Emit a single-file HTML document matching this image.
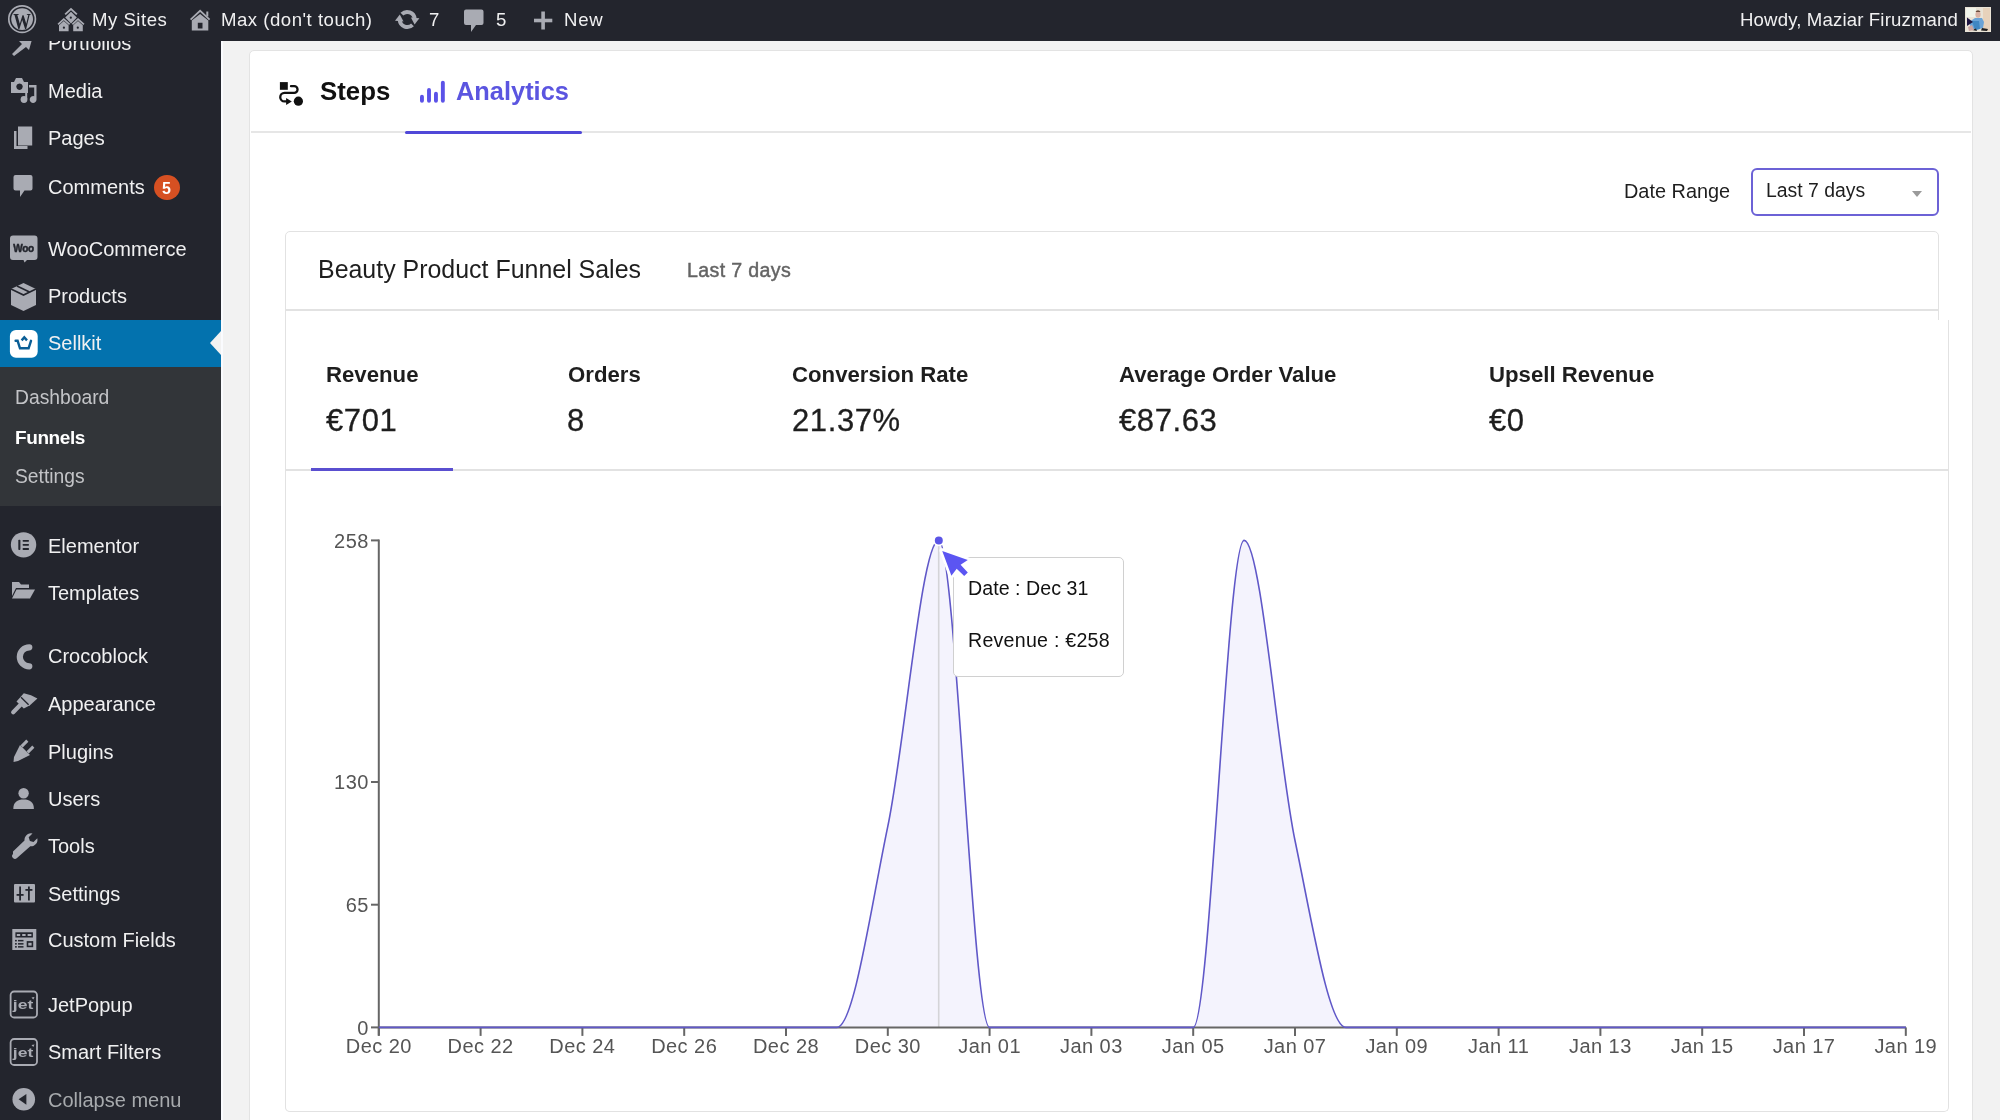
<!DOCTYPE html>
<html><head><meta charset="utf-8">
<style>
*{margin:0;padding:0;box-sizing:border-box}
.a,.t,.sub,svg{will-change:transform}
html,body{width:2000px;height:1120px;overflow:hidden;background:#f2f2f2;font-family:"Liberation Sans",sans-serif;position:relative}
.a{position:absolute;white-space:nowrap;line-height:1}
#bar{position:absolute;left:0;top:0;width:2000px;height:41px;background:#23252d;z-index:5}
#bar .t{position:absolute;color:#f0f0f1;font-size:18.6px;line-height:1;white-space:nowrap}
#side{position:absolute;left:0;top:0;width:221px;height:1120px;background:#23252d}
#side .t{position:absolute;left:48px;color:#f0f0f1;font-size:20px;line-height:1;margin-top:-0.6px;white-space:nowrap}
#side .ic{position:absolute;left:9px}
#side .sub{position:absolute;left:14.5px;color:#c3c4c7;font-size:19.3px;line-height:1;white-space:nowrap}
#panel{position:absolute;left:249px;top:50px;width:1724px;height:1200px;background:#fff;border:1.5px solid #e3e3e3;border-radius:5px}
</style></head>
<body>
<div id="side">
  <div id="sellbg" style="position:absolute;left:0;top:319.6px;width:221px;height:47.8px;background:#0372ae"></div>
  <div style="position:absolute;left:0;top:367px;width:221px;height:139px;background:#323539"></div>
  <div style="position:absolute;left:209.5px;top:330.7px;width:0;height:0;border-top:12.6px solid transparent;border-bottom:12.6px solid transparent;border-right:11.5px solid #f2f2f2"></div>
<svg style="position:absolute;left:0;top:0;z-index:1" width="230" height="1120" viewBox="0 0 230 1120">
 <g fill="#a9abb3">
  <!-- portfolios pin (partially hidden by bar) -->
  <path d="M12,54 L22,44 L19,41 L33,36 L29,50 L26,47 L14,56 Z"/>
  <!-- media: camera -->
  <path d="M11,82 h3 l2,-4 h6 l2,4 h4 v11 h-17 Z M19.5,83.5 a3.2,3.2 0 1,0 0.01,0 Z" fill-rule="evenodd"/>
  <circle cx="19.5" cy="86.5" r="2.6" fill="#23252d"/>
  <!-- media: notes -->
  <path d="M29,85 h7.5 v14.5 a3.4,3.4 0 1,1 -2.3,-3.2 v-8.8 h-5.2 Z"/>
  <circle cx="24" cy="99.5" r="3.4"/>
  <rect x="25.2" y="89" width="2" height="10"/>
  <!-- pages -->
  <path d="M14,131 h2.5 v15 h11 v3 h-13.5 Z"/>
  <rect x="18" y="126.5" width="14.2" height="19"/>
  <!-- comments bubble -->
  <path d="M15.5,175 h15 a2,2 0 0 1 2,2 v11.5 a2,2 0 0 1 -2,2 h-6 l-4.5,6.5 v-6.5 h-4.5 a2,2 0 0 1 -2,-2 v-11.5 a2,2 0 0 1 2,-2 Z"/>
  <!-- woo -->
  <path d="M13,235.5 h21.5 a3,3 0 0 1 3,3 v18.5 a3,3 0 0 1 -3,3 h-7.5 l-2.5,2.5 l-1,-2.5 h-10.5 a3,3 0 0 1 -3,-3 v-18.5 a3,3 0 0 1 3,-3 Z"/>
  <!-- products box -->
  <path d="M23.5,283 L36,289 L36,305 L23.5,311 L11,305 L11,289 Z"/>
  <!-- elementor -->
  <circle cx="23.55" cy="544.85" r="12.7"/>
  <!-- templates folder -->
  <path d="M12,582 h7 l2,2.5 h8 v3.5 h-13 l-4,8 Z"/>
  <path d="M16.5,589.5 h18.5 l-5,9 h-18 Z"/>
  <!-- crocoblock -->
  <path d="M29.3,647.3 A9.5,9.5 0 0 0 29.3,666.3" fill="none" stroke="#a9abb3" stroke-width="6.2" stroke-linecap="round"/>
  <!-- appearance brush -->
  <path d="M16.5,701.5 L23.8,693.2 L31,695.2 L37.4,698.6 L30,705.3 L23.8,708.6 Z"/><line x1="21" y1="697.2" x2="28.6" y2="704.8" stroke="#23252d" stroke-width="1.3"/>
  <line x1="13.2" y1="712.2" x2="20.5" y2="704.8" stroke="#a9abb3" stroke-width="4.2" stroke-linecap="round"/>
  <!-- plugins -->
  <path d="M14,757 L20,745 L30,755 L18,761 L13.5,762 Z"/>
  <rect x="23" y="739.5" width="3" height="8" transform="rotate(45 24.5 743.5)"/>
  <rect x="29" y="745.5" width="3" height="8" transform="rotate(45 30.5 749.5)"/>
  <!-- users -->
  <circle cx="23.6" cy="793.2" r="5.2"/>
  <path d="M13.3,809 c0,-7 4,-9.5 10.3,-9.5 s10.3,2.5 10.3,9.5 Z"/>
  <!-- tools wrench -->
  <path d="M13,851.5 L24.5,840.5 a6.5,6.5 0 0 1 8,-7 l-3.8,3.8 l1.2,3.6 l3.6,1.2 l3.8,-3.8 a6.5,6.5 0 0 1 -7,8 L17,858 a2.8,2.8 0 0 1 -4,-4 Z"/>
  <!-- settings sliders -->
  <rect x="14" y="884" width="21" height="18.5" rx="1"/>
  <!-- custom fields -->
  <rect x="12.3" y="929" width="24" height="21"/>
  <rect x="15.4" y="932.3" width="17.5" height="5.2" fill="#23252d"/>
  <rect x="16.8" y="934" width="3.4" height="2" />
  <rect x="22.2" y="934" width="3.4" height="2" />
  <rect x="27.6" y="934" width="3.8" height="2" />
  <g fill="#23252d"><rect x="18" y="939.9" width="5.5" height="1.5"/><rect x="18" y="943.1" width="5.5" height="1.5"/><rect x="18" y="946.1" width="5.5" height="1.5"/>
  <rect x="15" y="939.9" width="1.8" height="1.5"/><rect x="15" y="943.1" width="1.8" height="1.5"/><rect x="15" y="946.1" width="1.8" height="1.5"/>
  <rect x="26.7" y="941.1" width="6.5" height="6.1"/></g>
  <rect x="28.3" y="942.8" width="3.3" height="2.8"/>
  <!-- collapse -->
  <circle cx="23.75" cy="1099.3" r="11.3"/>
 </g>
 <!-- dark details -->
 <g fill="#23252d">
  <rect x="18.3" y="539.8" width="2.1" height="10.2" rx="0.8"/>
  <rect x="22.6" y="540" width="6.4" height="1.8" rx="0.7"/>
  <rect x="22.6" y="544" width="6.4" height="1.8" rx="0.7"/>
  <rect x="22.6" y="548.1" width="6.4" height="1.8" rx="0.7"/>
  <path d="M18.6,1099.3 L26.4,1093.9 L26.4,1104.7 Z"/>
  <!-- settings slider lines -->
  <rect x="19.2" y="886.5" width="1.8" height="14"/>
  <rect x="16.6" y="894" width="7" height="1.8"/>
  <rect x="28" y="886.5" width="1.8" height="14"/>
  <rect x="25.4" y="889" width="7" height="1.8"/>
  <!-- products box lines -->
  <path d="M11,289 L23.5,295 L36,289" fill="none" stroke="#23252d" stroke-width="1.6"/>
  
  <path d="M17,286 L29.5,292" fill="none" stroke="#23252d" stroke-width="1.6"/>
 </g>
 <!-- woo text -->
 <text x="23.6" y="251.6" text-anchor="middle" font-family="Liberation Sans" font-weight="bold" font-size="10" fill="#23252d" stroke="#23252d" stroke-width="0.5" letter-spacing="-0.3">Woo</text>
 <!-- sellkit -->
 <rect x="9.9" y="329.9" width="27.8" height="27.8" rx="6" fill="#fff"/>
 <path d="M15.6,340.8 H17.6 L20,348.3 H28.6 L31,340.8" fill="none" stroke="#0a5e96" stroke-width="2.4" stroke-linejoin="miter" stroke-linecap="round"/><path d="M21.6,340.4 L24.3,337.4 L27,340.4" fill="none" stroke="#0a5e96" stroke-width="2.4" stroke-linecap="butt"/>
 <!-- jet boxes -->
 <g fill="none" stroke="#a9abb3" stroke-width="1.8">
  <rect x="10.6" y="991.5" width="26.4" height="26" rx="3.5"/>
  <rect x="10.6" y="1039" width="26.4" height="26" rx="3.5"/>
 </g>
 <g fill="#a9abb3" font-family="Liberation Sans" font-weight="bold" font-size="13">
  <text x="12.8" y="1009.4" textLength="20.5" lengthAdjust="spacingAndGlyphs">jet</text>
  <text x="12.8" y="1056.9" textLength="20.5" lengthAdjust="spacingAndGlyphs">jet</text>
  <path d="M31.5,997.5 l3,-0.5 l-1.2,2.6 Z M31.5,1045 l3,-0.5 l-1.2,2.6 Z"/>
 </g>
</svg>

  <div class="t" style="top:34.07px">Portfolios</div>
  <div class="t" style="top:81.57px">Media</div>
  <div class="t" style="top:128.67px">Pages</div>
  <div class="t" style="top:177.37px">Comments</div>
  <div style="position:absolute;left:154.3px;top:175.2px;width:25.5px;height:25px;border-radius:50%;background:#d65022"></div>
  <div class="t" style="left:162.3px;top:181.2px;font-size:16px;font-weight:bold;color:#fff;margin-top:0">5</div>
  <div class="t" style="top:239.57px">WooCommerce</div>
  <div class="t" style="top:287.07px">Products</div>
  <div class="t" style="top:334.07px">Sellkit</div>
  <div class="sub" style="top:388.26px">Dashboard</div>
  <div class="sub" style="top:428.41px;color:#fff;font-weight:bold;font-size:19px;letter-spacing:-0.4px">Funnels</div>
  <div class="sub" style="top:467.16px">Settings</div>
  <div class="t" style="top:536.67px">Elementor</div>
  <div class="t" style="top:583.47px">Templates</div>
  <div class="t" style="top:646.47px">Crocoblock</div>
  <div class="t" style="top:694.47px">Appearance</div>
  <div class="t" style="top:742.37px">Plugins</div>
  <div class="t" style="top:789.27px">Users</div>
  <div class="t" style="top:836.87px">Tools</div>
  <div class="t" style="top:884.17px">Settings</div>
  <div class="t" style="top:931.07px">Custom Fields</div>
  <div class="t" style="top:995.77px">JetPopup</div>
  <div class="t" style="top:1042.67px">Smart Filters</div>
  <div class="t" style="top:1090.67px;color:#a7aaad">Collapse menu</div>
</div>
<div id="bar">
<svg style="position:absolute;left:0;top:0;z-index:6" width="2000" height="41" viewBox="0 0 2000 41">
 <g fill="#a9abb3">
  <!-- WP logo -->
  <circle cx="22.1" cy="19.1" r="13.3" fill="none" stroke="#a9abb3" stroke-width="1.7"/>
  <circle cx="22.1" cy="19.1" r="10.9"/>
  <!-- my sites -->
  <path d="M64.5,13.8 L71,7.8 L77.5,13.8 L76.2,15 L71,10.2 L65.8,15 Z"/>
  <path d="M71,11.8 L76.8,17.6 L71,23.4 L65.2,17.6 Z"/>
  <path d="M57.5,23.8 L63.8,18 L70.2,23.8 L69,25 L63.8,20.3 L58.7,25 Z"/>
  <path d="M59,25.3 L63.8,21 L68.6,25.3 V31.2 H59 Z"/>
  <path d="M71.8,23.8 L78,18 L84.5,23.8 L83.3,25 L78,20.3 L73,25 Z"/>
  <path d="M73.2,25.3 L78,21 L82.8,25.3 V31.2 H73.2 Z"/>
  <!-- home -->
  <path d="M190,19 L200.1,9.6 L210.2,19 L209,20.3 L200.1,12 L191.2,20.3 Z"/>
  <rect x="206.3" y="11.5" width="2" height="5"/>
  <path d="M191.8,20.6 L200.1,13.9 L208.3,20.6 V30.5 H191.8 Z M197.8,22.8 V28.6 H202.5 V22.8 Z" fill-rule="evenodd"/>
  <!-- comments -->
  <path d="M466,9.6 h15.5 a2,2 0 0 1 2,2 v11.5 a2,2 0 0 1 -2,2 h-5.5 l-5,6.8 v-6.8 h-5 a2,2 0 0 1 -2,-2 v-11.5 a2,2 0 0 1 2,-2 Z"/>
  <!-- plus -->
  <rect x="541.3" y="11.5" width="3.6" height="18"/>
  <rect x="534" y="18.7" width="18.3" height="3.6"/>
 </g>
 <!-- updates -->
 <g fill="none" stroke="#a9abb3" stroke-width="4">
  <path d="M401.9,14.2 A7.5,7.5 0 0 1 414.67,18.85"/>
  <path d="M412.5,24.8 A7.5,7.5 0 0 1 399.73,20.15"/>
 </g>
 <g fill="#a9abb3">
  <path d="M419.4,18.3 L410.9,17.6 L414.6,24.6 Z"/>
  <path d="M395,20.7 L403.5,21.4 L399.8,14.4 Z"/>
 </g>
 <!-- wp W -->
 <text x="13.3" y="29" font-family="Liberation Serif" font-weight="bold" font-size="23" fill="#23252d" textLength="17.6" lengthAdjust="spacingAndGlyphs">W</text>
 <!-- dots for my sites -->
 <g fill="#23252d">
  <circle cx="70.8" cy="17.7" r="1.1"/>
  <circle cx="63.9" cy="27.7" r="1.1"/>
  <circle cx="77.8" cy="27.7" r="1.1"/>
 </g>
 <!-- avatar -->
 <g>
  <rect x="1965" y="7" width="26" height="25" fill="#e9e3d6"/>
  <rect x="1966" y="8" width="10" height="9" fill="#f1f4ea"/>
  <rect x="1983" y="8" width="7" height="23" fill="#e7d2bb"/>
  <ellipse cx="1978" cy="14.5" rx="2.6" ry="3.2" fill="#d9b2a4"/>
  <path d="M1975.5,12 a2.6,2.4 0 0 1 5,0 Z" fill="#6a4d3d"/>
  <path d="M1969,22 L1975,18 L1982,18 L1984,22 L1983,28 L1976,30 L1971,28 Z" fill="#6aa3d6"/>
  <path d="M1972,21 L1979,21 L1980,29 L1975,30 Z" fill="#3f86c2"/>
  <path d="M1967,17.5 L1973,22 L1967,26 Z" fill="#1d1540"/>
  <path d="M1972,30 L1976,28.5 L1977,31 Z M1982,28 L1988,29 L1987,31 L1981,30.5 Z" fill="#222"/>
  <path d="M1968,27 L1972,25 L1974,30 L1969,31 Z" fill="#cba5a0"/>
 </g>
</svg>

  <div class="t" style="left:92px;top:11.3px;letter-spacing:0.5px">My Sites</div>
  <div class="t" style="left:221px;top:11.3px;letter-spacing:0.5px">Max (don't touch)</div>
  <div class="t" style="left:428.5px;top:11.3px">7</div>
  <div class="t" style="left:496px;top:11.3px">5</div>
  <div class="t" style="left:563.8px;top:11.3px;letter-spacing:0.7px">New</div>
  <div class="t" style="left:1740px;top:11.3px;letter-spacing:0.15px">Howdy, Maziar Firuzmand</div>
</div>
<div style="position:absolute;left:221px;top:41px;width:1.5px;height:1079px;background:#fafbfe"></div>
<div id="panel"></div>
<div id="main">
<svg style="position:absolute;left:0;top:0" width="600" height="140" viewBox="0 0 600 140">
  <rect x="279.9" y="82.1" width="7.9" height="7.7" fill="#111"/>
  <path d="M291,86.2 H294.2 A3.3,3.3 0 0 1 294.2,92.9 H284.5 A4.25,4.25 0 0 0 284.5,101.4 H288" fill="none" stroke="#111" stroke-width="2.3" stroke-linecap="round"/>
  <path d="M286.1,98.1 L291.8,101.5 L286.1,104.9 Z" fill="#111"/>
  <circle cx="298.4" cy="101.2" r="4.6" fill="#111"/>
  <g stroke="#5b52e8" stroke-width="3.9" stroke-linecap="round">
   <line x1="421.95" y1="96.8" x2="421.95" y2="100.7"/>
   <line x1="429" y1="89.9" x2="429" y2="100.7"/>
   <line x1="435.95" y1="93.8" x2="435.95" y2="100.7"/>
   <line x1="442.85" y1="82.8" x2="442.85" y2="100.7"/>
  </g>
</svg>

  <!-- tabs -->
  <div style="position:absolute;left:251px;top:131px;width:1720px;height:2px;background:#e6e6e6"></div>
  <div style="position:absolute;left:405px;top:130.5px;width:177px;height:3px;background:#5048d8;border-radius:2px"></div>
  <div class="a" style="left:319.5px;top:78.6px;font-size:25.8px;font-weight:bold;color:#111">Steps</div>
  <div class="a" style="left:456px;top:78.7px;font-size:25.4px;font-weight:bold;color:#5b55e0">Analytics</div>
  <!-- date range -->
  <div class="a" style="left:1624px;top:181.6px;font-size:19.9px;color:#1e1e1e">Date Range</div>
  <div style="position:absolute;left:1751px;top:168px;width:188px;height:48px;border:2px solid #6c62d6;border-radius:6px;background:#fff"></div>
  <div class="a" style="left:1766px;top:180.9px;font-size:19.4px;color:#1e1e1e">Last 7 days</div>
  <div style="position:absolute;left:1912px;top:191px;width:0;height:0;border-left:5.5px solid transparent;border-right:5.5px solid transparent;border-top:6px solid #9a9a9a"></div>
  <!-- chart card -->
  <div style="position:absolute;left:285px;top:231px;width:1654px;height:881px;border:1.5px solid #e2e2e2;border-radius:5px;background:#fff"></div>
  <div style="position:absolute;left:286px;top:309px;width:1652px;height:1.5px;background:#e2e2e2"></div>
  <div style="position:absolute;left:285px;top:320px;width:1664px;height:792px;background:#fff;border:1.5px solid #e2e2e2;border-top:none;border-radius:0 0 5px 5px"></div>
  <div class="a" style="left:318px;top:257px;font-size:24.95px;color:#1e1e1e">Beauty Product Funnel Sales</div>
  <div class="a" style="left:686.5px;top:261.2px;font-size:19.6px;letter-spacing:0.35px;-webkit-text-stroke:0.45px #646464;color:#646464">Last 7 days</div>
  <!-- stats -->
  <div class="a" style="left:326px;top:364.4px;font-size:22.2px;font-weight:bold;color:#1e1e1e">Revenue</div>
  <div class="a" style="left:568px;top:364.4px;font-size:22.2px;font-weight:bold;color:#1e1e1e">Orders</div>
  <div class="a" style="left:792px;top:364.4px;font-size:22.2px;font-weight:bold;color:#1e1e1e">Conversion Rate</div>
  <div class="a" style="left:1119px;top:364.4px;font-size:22.2px;font-weight:bold;color:#1e1e1e">Average Order Value</div>
  <div class="a" style="left:1489px;top:364.4px;font-size:22.2px;font-weight:bold;color:#1e1e1e">Upsell Revenue</div>
  <div class="a" style="left:326px;top:404.5px;font-size:31px;letter-spacing:0.6px;-webkit-text-stroke:0.3px #1e1e1e;color:#1e1e1e">€701</div>
  <div class="a" style="left:567px;top:404.5px;font-size:31px;letter-spacing:0.6px;-webkit-text-stroke:0.3px #1e1e1e;color:#1e1e1e">8</div>
  <div class="a" style="left:792px;top:404.5px;font-size:31px;letter-spacing:0.6px;-webkit-text-stroke:0.3px #1e1e1e;color:#1e1e1e">21.37%</div>
  <div class="a" style="left:1119px;top:404.5px;font-size:31px;letter-spacing:0.6px;-webkit-text-stroke:0.3px #1e1e1e;color:#1e1e1e">€87.63</div>
  <div class="a" style="left:1489px;top:404.5px;font-size:31px;letter-spacing:0.6px;-webkit-text-stroke:0.3px #1e1e1e;color:#1e1e1e">€0</div>
  <div style="position:absolute;left:286px;top:469px;width:1663px;height:1.5px;background:#e2e2e2"></div>
  <div style="position:absolute;left:311px;top:467.5px;width:142px;height:3.5px;background:#5a4fd0"></div>
  <svg style="position:absolute;left:0;top:0" width="2000" height="1120" viewBox="0 0 2000 1120">
  <path d="M378.80,1027.40C395.77,1027.40 412.73,1027.40 429.70,1027.40C446.67,1027.40 463.63,1027.40 480.60,1027.40C497.57,1027.40 514.53,1027.40 531.50,1027.40C548.47,1027.40 565.43,1027.40 582.40,1027.40C599.37,1027.40 616.33,1027.40 633.30,1027.40C650.27,1027.40 667.23,1027.40 684.20,1027.40C701.17,1027.40 718.13,1027.40 735.10,1027.40C752.07,1027.40 769.03,1027.40 786.00,1027.40C802.97,1027.40 819.93,1027.40 836.90,1027.40C853.87,1027.40 870.83,907.54 887.80,826.37C904.77,745.20 921.73,540.40 938.70,540.40C955.67,540.40 972.63,1027.40 989.60,1027.40C1006.57,1027.40 1023.53,1027.40 1040.50,1027.40C1057.47,1027.40 1074.43,1027.40 1091.40,1027.40C1108.37,1027.40 1125.33,1027.40 1142.30,1027.40C1159.27,1027.40 1176.23,1027.40 1193.20,1027.40C1210.17,1027.40 1227.13,540.40 1244.10,540.40C1261.07,540.40 1278.03,759.36 1295.00,840.53C1311.97,921.69 1328.93,1027.40 1345.90,1027.40C1362.87,1027.40 1379.83,1027.40 1396.80,1027.40C1413.77,1027.40 1430.73,1027.40 1447.70,1027.40C1464.67,1027.40 1481.63,1027.40 1498.60,1027.40C1515.57,1027.40 1532.53,1027.40 1549.50,1027.40C1566.47,1027.40 1583.43,1027.40 1600.40,1027.40C1617.37,1027.40 1634.33,1027.40 1651.30,1027.40C1668.27,1027.40 1685.23,1027.40 1702.20,1027.40C1719.17,1027.40 1736.13,1027.40 1753.10,1027.40C1770.07,1027.40 1787.03,1027.40 1804.00,1027.40C1820.97,1027.40 1837.93,1027.40 1854.90,1027.40C1871.87,1027.40 1888.83,1027.40 1905.80,1027.40 L1905.8,1027.4 L378.8,1027.4 Z" fill="#f4f3fd" stroke="none"/>
  <line x1="938.7" y1="544" x2="938.7" y2="1027" stroke="#d4d4d8" stroke-width="1.6"/>
  <line x1="378.8" y1="539.4" x2="378.8" y2="1035.4" stroke="#666" stroke-width="2"/>
  <line x1="378.8" y1="1027.4" x2="1906" y2="1027.4" stroke="#666" stroke-width="2"/>
  <line x1="378.8" y1="1027.4" x2="378.8" y2="1035.9" stroke="#666" stroke-width="2"/>
  <text x="378.8" y="1053" text-anchor="middle" font-size="20" letter-spacing="0.45" fill="#555" font-family="Liberation Sans">Dec 20</text>
  <line x1="480.6" y1="1027.4" x2="480.6" y2="1035.9" stroke="#666" stroke-width="2"/>
  <text x="480.6" y="1053" text-anchor="middle" font-size="20" letter-spacing="0.45" fill="#555" font-family="Liberation Sans">Dec 22</text>
  <line x1="582.4" y1="1027.4" x2="582.4" y2="1035.9" stroke="#666" stroke-width="2"/>
  <text x="582.4" y="1053" text-anchor="middle" font-size="20" letter-spacing="0.45" fill="#555" font-family="Liberation Sans">Dec 24</text>
  <line x1="684.2" y1="1027.4" x2="684.2" y2="1035.9" stroke="#666" stroke-width="2"/>
  <text x="684.2" y="1053" text-anchor="middle" font-size="20" letter-spacing="0.45" fill="#555" font-family="Liberation Sans">Dec 26</text>
  <line x1="786.0" y1="1027.4" x2="786.0" y2="1035.9" stroke="#666" stroke-width="2"/>
  <text x="786.0" y="1053" text-anchor="middle" font-size="20" letter-spacing="0.45" fill="#555" font-family="Liberation Sans">Dec 28</text>
  <line x1="887.8" y1="1027.4" x2="887.8" y2="1035.9" stroke="#666" stroke-width="2"/>
  <text x="887.8" y="1053" text-anchor="middle" font-size="20" letter-spacing="0.45" fill="#555" font-family="Liberation Sans">Dec 30</text>
  <line x1="989.6" y1="1027.4" x2="989.6" y2="1035.9" stroke="#666" stroke-width="2"/>
  <text x="989.6" y="1053" text-anchor="middle" font-size="20" letter-spacing="0.45" fill="#555" font-family="Liberation Sans">Jan 01</text>
  <line x1="1091.4" y1="1027.4" x2="1091.4" y2="1035.9" stroke="#666" stroke-width="2"/>
  <text x="1091.4" y="1053" text-anchor="middle" font-size="20" letter-spacing="0.45" fill="#555" font-family="Liberation Sans">Jan 03</text>
  <line x1="1193.2" y1="1027.4" x2="1193.2" y2="1035.9" stroke="#666" stroke-width="2"/>
  <text x="1193.2" y="1053" text-anchor="middle" font-size="20" letter-spacing="0.45" fill="#555" font-family="Liberation Sans">Jan 05</text>
  <line x1="1295.0" y1="1027.4" x2="1295.0" y2="1035.9" stroke="#666" stroke-width="2"/>
  <text x="1295.0" y="1053" text-anchor="middle" font-size="20" letter-spacing="0.45" fill="#555" font-family="Liberation Sans">Jan 07</text>
  <line x1="1396.8" y1="1027.4" x2="1396.8" y2="1035.9" stroke="#666" stroke-width="2"/>
  <text x="1396.8" y="1053" text-anchor="middle" font-size="20" letter-spacing="0.45" fill="#555" font-family="Liberation Sans">Jan 09</text>
  <line x1="1498.6" y1="1027.4" x2="1498.6" y2="1035.9" stroke="#666" stroke-width="2"/>
  <text x="1498.6" y="1053" text-anchor="middle" font-size="20" letter-spacing="0.45" fill="#555" font-family="Liberation Sans">Jan 11</text>
  <line x1="1600.4" y1="1027.4" x2="1600.4" y2="1035.9" stroke="#666" stroke-width="2"/>
  <text x="1600.4" y="1053" text-anchor="middle" font-size="20" letter-spacing="0.45" fill="#555" font-family="Liberation Sans">Jan 13</text>
  <line x1="1702.2" y1="1027.4" x2="1702.2" y2="1035.9" stroke="#666" stroke-width="2"/>
  <text x="1702.2" y="1053" text-anchor="middle" font-size="20" letter-spacing="0.45" fill="#555" font-family="Liberation Sans">Jan 15</text>
  <line x1="1804.0" y1="1027.4" x2="1804.0" y2="1035.9" stroke="#666" stroke-width="2"/>
  <text x="1804.0" y="1053" text-anchor="middle" font-size="20" letter-spacing="0.45" fill="#555" font-family="Liberation Sans">Jan 17</text>
  <line x1="1905.8" y1="1027.4" x2="1905.8" y2="1035.9" stroke="#666" stroke-width="2"/>
  <text x="1905.8" y="1053" text-anchor="middle" font-size="20" letter-spacing="0.45" fill="#555" font-family="Liberation Sans">Jan 19</text>
  <line x1="371" y1="540.4" x2="378.8" y2="540.4" stroke="#666" stroke-width="2"/>
  <text x="368.8" y="547.6" text-anchor="end" font-size="20" letter-spacing="0.45" fill="#555" font-family="Liberation Sans">258</text>
  <line x1="371" y1="782.0" x2="378.8" y2="782.0" stroke="#666" stroke-width="2"/>
  <text x="368.8" y="789.2" text-anchor="end" font-size="20" letter-spacing="0.45" fill="#555" font-family="Liberation Sans">130</text>
  <line x1="371" y1="904.7" x2="378.8" y2="904.7" stroke="#666" stroke-width="2"/>
  <text x="368.8" y="911.9" text-anchor="end" font-size="20" letter-spacing="0.45" fill="#555" font-family="Liberation Sans">65</text>
  <line x1="371" y1="1027.4" x2="378.8" y2="1027.4" stroke="#666" stroke-width="2"/>
  <text x="368.8" y="1034.6" text-anchor="end" font-size="20" letter-spacing="0.45" fill="#555" font-family="Liberation Sans">0</text>
  <path d="M378.80,1027.40C395.77,1027.40 412.73,1027.40 429.70,1027.40C446.67,1027.40 463.63,1027.40 480.60,1027.40C497.57,1027.40 514.53,1027.40 531.50,1027.40C548.47,1027.40 565.43,1027.40 582.40,1027.40C599.37,1027.40 616.33,1027.40 633.30,1027.40C650.27,1027.40 667.23,1027.40 684.20,1027.40C701.17,1027.40 718.13,1027.40 735.10,1027.40C752.07,1027.40 769.03,1027.40 786.00,1027.40C802.97,1027.40 819.93,1027.40 836.90,1027.40C853.87,1027.40 870.83,907.54 887.80,826.37C904.77,745.20 921.73,540.40 938.70,540.40C955.67,540.40 972.63,1027.40 989.60,1027.40C1006.57,1027.40 1023.53,1027.40 1040.50,1027.40C1057.47,1027.40 1074.43,1027.40 1091.40,1027.40C1108.37,1027.40 1125.33,1027.40 1142.30,1027.40C1159.27,1027.40 1176.23,1027.40 1193.20,1027.40C1210.17,1027.40 1227.13,540.40 1244.10,540.40C1261.07,540.40 1278.03,759.36 1295.00,840.53C1311.97,921.69 1328.93,1027.40 1345.90,1027.40C1362.87,1027.40 1379.83,1027.40 1396.80,1027.40C1413.77,1027.40 1430.73,1027.40 1447.70,1027.40C1464.67,1027.40 1481.63,1027.40 1498.60,1027.40C1515.57,1027.40 1532.53,1027.40 1549.50,1027.40C1566.47,1027.40 1583.43,1027.40 1600.40,1027.40C1617.37,1027.40 1634.33,1027.40 1651.30,1027.40C1668.27,1027.40 1685.23,1027.40 1702.20,1027.40C1719.17,1027.40 1736.13,1027.40 1753.10,1027.40C1770.07,1027.40 1787.03,1027.40 1804.00,1027.40C1820.97,1027.40 1837.93,1027.40 1854.90,1027.40C1871.87,1027.40 1888.83,1027.40 1905.80,1027.40" fill="none" stroke="#6058c8" stroke-width="1.6"/>
  <circle cx="938.8" cy="540.4" r="4.9" fill="#5b55e6" stroke="#fff" stroke-width="1.8"/>
  </svg>
  <div style="position:absolute;left:953px;top:557px;width:171px;height:120px;background:#fff;border:1.5px solid #d0d0d0;border-radius:5px"></div>
  <div class="a" style="left:968px;top:579.4px;font-size:19.6px;letter-spacing:0.05px;color:#111">Date : Dec 31</div>
  <div class="a" style="left:968px;top:631px;font-size:19.6px;letter-spacing:0.25px;color:#111">Revenue : €258</div>
  <svg style="position:absolute;left:0;top:0" width="2000" height="1120"><path d="M942.25,550.9 L967.8,560 L960.6,564.8 L967.8,572.5 L964.2,575.9 L956.7,568.75 L951.4,575.7 Z" fill="#fff" stroke="#fff" stroke-width="5.5" stroke-linejoin="round"/><path d="M942.25,550.9 L967.8,560 L960.6,564.8 L967.8,572.5 L964.2,575.9 L956.7,568.75 L951.4,575.7 Z" fill="#5b55f2" stroke="#fff" stroke-width="1.6" stroke-linejoin="round" paint-order="stroke"/></svg>
</div>

</body></html>
